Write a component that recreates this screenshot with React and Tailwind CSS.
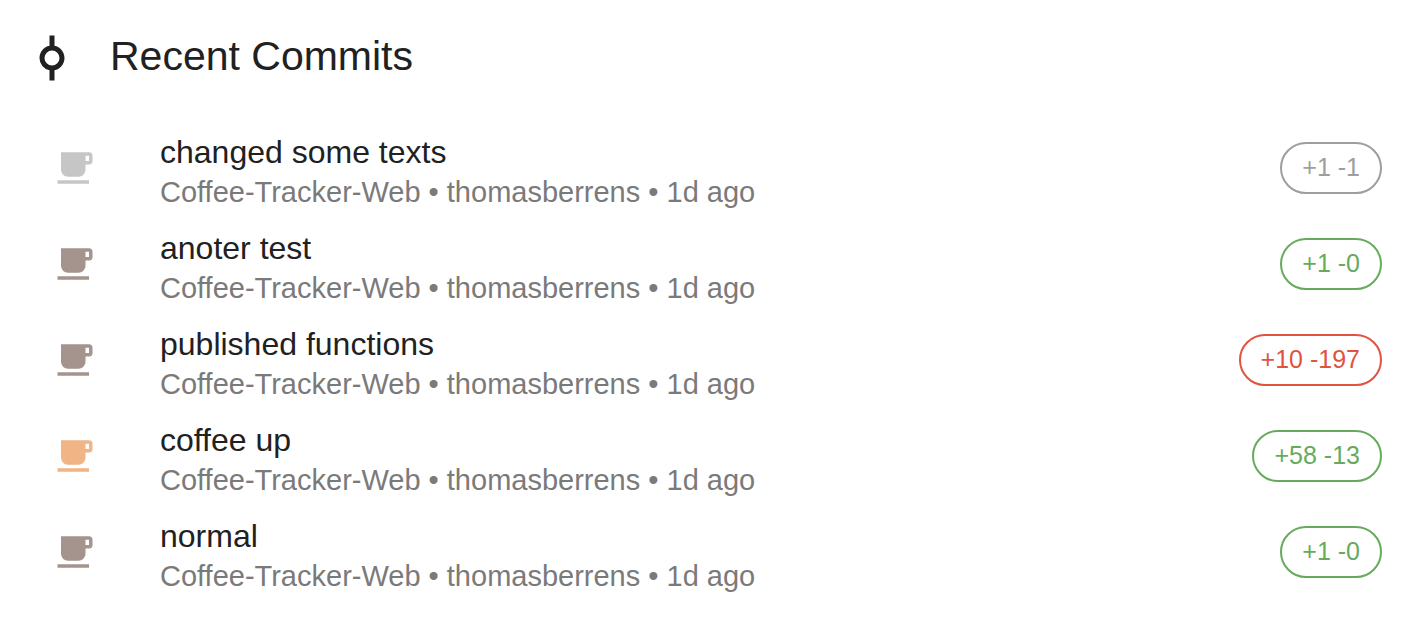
import React from 'react';

const commits = [
  { id: 1, message: 'changed some texts', additions: 1, deletions: 1, cup: 'text-[#c6c6c6]', badge: 'text-[#9e9e9e] border-[#9e9e9e]' },
  { id: 2, message: 'anoter test', additions: 1, deletions: 0, cup: 'text-[#a4948d]', badge: 'text-[#66ab5b] border-[#66ab5b]' },
  { id: 3, message: 'published functions', additions: 10, deletions: 197, cup: 'text-[#a4948d]', badge: 'text-[#e15241] border-[#e15241]' },
  { id: 4, message: 'coffee up', additions: 58, deletions: 13, cup: 'text-[#f0b485]', badge: 'text-[#66ab5b] border-[#66ab5b]' },
  { id: 5, message: 'normal', additions: 1, deletions: 0, cup: 'text-[#a4948d]', badge: 'text-[#66ab5b] border-[#66ab5b]' },
];

const CommitIcon = () => (
  <svg viewBox="0 0 24 24" className="size-15" fill="currentColor" aria-hidden="true">
    <path d="M17 12c0 2.42-1.72 4.44-4 4.9V21h-2v-4.1A5 5 0 0 1 7 12c0-2.42 1.72-4.44 4-4.9V3h2v4.1c2.28.46 4 2.48 4 4.9M12 9a3 3 0 1 0 0 6 3 3 0 0 0 0-6" />
  </svg>
);

const CupIcon = ({ className }) => (
  <svg viewBox="0 0 24 24" className={`size-[42px] ${className}`} fill="currentColor" aria-hidden="true">
    <path d="M2 21h18v-2H2M20 8h-2V5h2m0-2H4v10a4 4 0 0 0 4 4h6a4 4 0 0 0 4-4v-3h2a2 2 0 0 0 2-2V5a2 2 0 0 0-2-2" />
  </svg>
);

const App = () => {
  return (
    <main className="bg-white px-[22px] pt-6 pb-8 font-['Liberation_Sans',Arial,sans-serif] text-[#212121]">
      {/* Header */}
      <header className="flex h-16 items-end gap-7">
        <CommitIcon />
        <h1 className="pb-2 text-[41px] leading-12">Recent Commits</h1>
      </header>

      {/* Commits */}
      <ul className="mt-8">
        {commits.map((commit) => (
          <li key={commit.id} className="flex h-24 items-center pr-[22px] pl-8">
            <CupIcon className={commit.cup} />
            <div className="ml-16 flex-1 pt-2">
              <p className="text-[32px] leading-10">{commit.message}</p>
              <p className="text-[29px] leading-10 text-[#7a7a7a]">Coffee-Tracker-Web • thomasberrens • 1d ago</p>
            </div>
            <span className={`flex h-[52px] items-center rounded-full border-2 px-5 text-[25px] ${commit.badge}`}>
              +{commit.additions} -{commit.deletions}
            </span>
          </li>
        ))}
      </ul>
    </main>
  );
};

export default App;
